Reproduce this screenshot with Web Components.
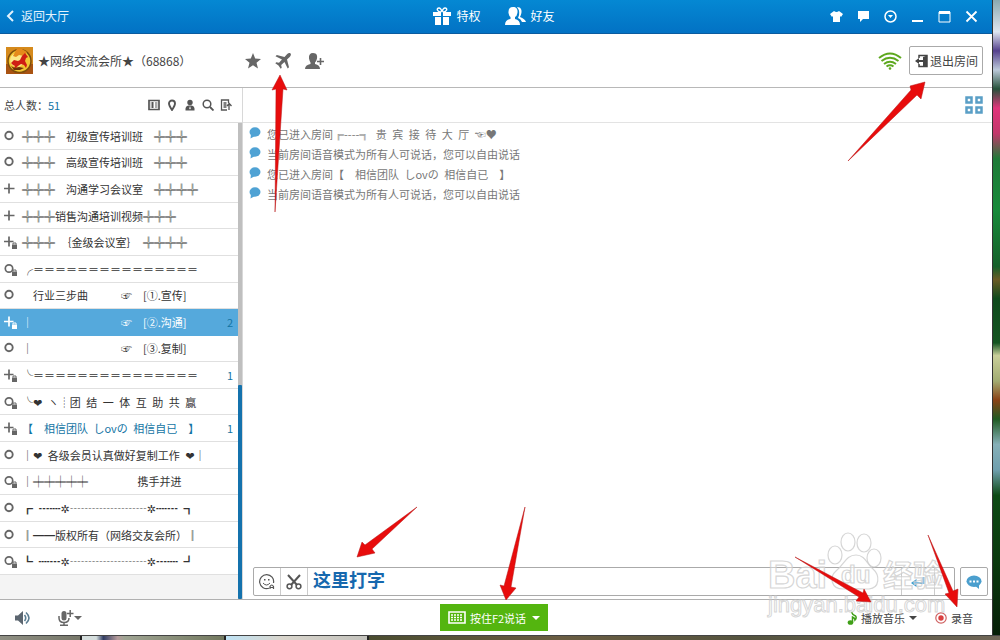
<!DOCTYPE html>
<html lang="zh-CN">
<head>
<meta charset="utf-8">
<title>网络交流会所</title>
<style>
    html, body {
        margin: 0;
        height: 100%;
    }
    body {
        font: 11px/20px "Noto Sans CJK SC", "DejaVu Sans", sans-serif;
        color: #444;
        overflow: hidden;
    }
</style>
</head>
<body>
<desktop-area>
    <room-window>
        <title-bar slot="title"></title-bar>
        <room-bar slot="room" name="★网络交流会所★" number="68868"></room-bar>
        <room-list slot="side" total="51"></room-list>
        <chat-panel slot="main">
            <chat-line>您已进入房间╔----╗&ensp;贵&ensp;宾&ensp;接&ensp;待&ensp;大&ensp;厅&ensp;☜♥</chat-line>
            <chat-line>当前房间语音模式为所有人可说话，您可以自由说话</chat-line>
            <chat-line>您已进入房间【　相信团队&ensp;しovの&ensp;相信自已　】</chat-line>
            <chat-line>当前房间语音模式为所有人可说话，您可以自由说话</chat-line>
        </chat-panel>
        <status-bar slot="status"></status-bar>
    </room-window>
    <site-watermark slot="over"></site-watermark>
    <guide-arrows slot="over"></guide-arrows>
</desktop-area>

<script>
const ICONS = {
    back: ['0 0 8 12', '<path d="M7 1 2 6l5 5" fill="none" stroke="currentColor" stroke-width="2"/>'],
    gift: ['0 0 18 18', '<path d="M0 5h8v4H0zM10 5h8v4h-8zM2 10h6v8H2zM10 10h6v8h-6z" fill="currentColor"/><path d="M8 5C4 5 3 1 6 1q2 0 3 4q1-4 3-4c3 0 2 4-2 4" fill="none" stroke="currentColor" stroke-width="1.4"/>'],
    friends: ['0 0 21 18', '<path d="M8 0c4 0 5 3 4.400 6Q12 9 10 10v2q5 1 5 6H0q0-5 5.500-6v-2Q4 9 3.500 6 3 0 8 0z" fill="currentColor"/><path d="M12 0c4 0 5 3 4.400 6Q16 8 15 10q5 2 6 5h-4q-1-3-4-4 3-6-1-11z" fill="currentColor"/>'],
    shirt: ['0 0 13 13', '<path d="M4 1q2.500 2 5 0l4 3-2 3-1-1v6H3V6L2 7 0 4z" fill="currentColor"/>'],
    say: ['0 0 13 13', '<path d="M1 1h11v8H6l-3 3V9H1z" fill="currentColor"/>'],
    more: ['0 0 13 13', '<circle cx="6.500" cy="6.500" r="5.500" fill="none" stroke="currentColor" stroke-width="1.500"/><path d="M4 5h5L6.500 8z" fill="currentColor"/>'],
    min: ['0 0 13 13', '<path d="M1 10h11v2H1z" fill="currentColor"/>'],
    max: ['0 0 13 13', '<path d="M1 2h11v10H1z" fill="none" stroke="currentColor"/><path d="M1 1h11v3H1z" fill="currentColor"/>'],
    close: ['0 0 13 13', '<path d="m1.500 1.500 10 10m0-10-10 10" stroke="currentColor" stroke-width="1.800"/>'],
    star: ['0 0 16 16', '<path d="m8 0 2.200 5.600 5.800.4-4.500 3.700L13 15.500l-5-3.200-5 3.200 1.500-5.800L0 6l5.800-.4z" fill="currentColor"/>'],
    plane: ['0 0 16 16', '<path d="M15.500.5c-1-1-2.700 0-3.500.8L9.500 4 1.800 2 .5 3.300 7 6.500 4 9.800l-2.700-.5-1 1 3.200 2.200 2.200 3.200 1-1L6.200 12l3.300-3 3.200 6.500 1.300-1.300-2-7.700L14.700 4c.8-.8 1.800-2.500.8-3.500z" fill="currentColor"/>'],
    adduser: ['0 0 19 16', '<path d="M8 0c4 0 4.500 3 4 5.500Q11.500 8 10 9.500v1.500q5 1 5 5H0q0-4 5.500-5V9.500Q4.500 8 4 5.500 3.500 0 8 0z" fill="currentColor"/><path d="M12 8.500h7M15.500 5v7" stroke="currentColor" stroke-width="1.600"/>'],
    wifi: ['0 0 24 18', '<g fill="none" stroke="#5da81e" stroke-width="2"><path d="M1 6Q12-3 23 6M3.500 9q8.500-6.500 17 0M6 12q6-4.500 12 0M8.500 14.500q3.500-2.500 7 0"/></g><circle cx="12" cy="16.500" r="1.300" fill="#5da81e"/>'],
    exit: ['0 0 13 14', '<path d="M4 4V1.500h8v11H4V10" fill="none" stroke="currentColor" stroke-width="1.500"/><path d="M8 3l4-1.500v11L8 13zM0 7l4-3v2h4v2H4v2z" fill="currentColor"/>'],
    card: ['0 0 12 12', '<path d="M1 1.500h10v9H1z" fill="none" stroke="currentColor" stroke-width="1.700"/><path d="M2.500 4H6M2.500 6H6M2.500 8H6M4.500 3v6M7 4h2.500M7 6h2.500M7 8h2.500" stroke="currentColor"/>'],
    pin: ['0 0 12 12', '<path d="M6 1.500a3 3 0 0 1 3 3Q9 6.500 6 11 3 6.500 3 4.500a3 3 0 0 1 3-3z" fill="none" stroke="currentColor" stroke-width="1.900"/>'],
    user: ['0 0 12 12', '<circle cx="6" cy="3.500" r="2.700" fill="currentColor"/><path d="M1.500 11.500Q1 7 4.500 6.500h3Q11 7 10.500 11.500z" fill="currentColor"/><path d="m6 7 .8 2.500L6 10.500l-.8-1z" fill="#fff"/>'],
    search: ['0 0 12 12', '<circle cx="5" cy="5" r="3.800" fill="none" stroke="currentColor" stroke-width="1.500"/><path d="m8 8 3.500 3.500" stroke="currentColor" stroke-width="1.800"/>'],
    export: ['0 0 12 12', '<path d="M7 11H1.500V1h7v3M3.500 4h3M3.500 6h3M3.500 8h3" fill="none" stroke="currentColor" stroke-width="1.300"/><path d="M9 11V5M7 7l2.200-2.500L11.500 7" fill="none" stroke="currentColor" stroke-width="1.300"/>'],
    open: ['0 0 14 14', '<circle cx="5" cy="6.500" r="3.700" fill="none" stroke="currentColor" stroke-width="1.900"/>'],
    plus: ['0 0 14 14', '<path d="M0 6.500h10.500M5 1.500v10" stroke="currentColor" stroke-width="1.700"/>'],
    openlock: ['0 0 14 14', '<circle cx="5" cy="6.500" r="3.700" fill="none" stroke="currentColor" stroke-width="1.700"/><path d="M8 9.500h5v4.500H8z" fill="currentColor"/><path d="M9 9.500V8h3v1.500" fill="none" stroke="currentColor"/>'],
    pluslock: ['0 0 14 14', '<path d="M0 6.500h9.500M5 1.500v10" stroke="currentColor" stroke-width="1.700"/><path d="M8 9.500h5v4.500H8z" fill="currentColor"/><path d="M9 9.500V8h3v1.500" fill="none" stroke="currentColor"/>'],
    grid: ['0 0 18 18', '<g fill="none" stroke="#5a9fc6" stroke-width="2.500"><path d="M1.500 1.500h5v5h-5zM11.500 1.500h5v5h-5zM1.500 11.500h5v5h-5zM11.500 11.500h5v5h-5z"/></g>'],
    bubble: ['0 0 12 12', '<ellipse cx="6" cy="5" rx="5.500" ry="4.700" fill="#4fa2d4"/><path d="m2 7-.5 4.500L6 9z" fill="#4fa2d4"/>'],
    smile: ['0 0 16 16', '<path d="M10 14.200A7 7 0 1 1 14.500 9" fill="none" stroke="currentColor" stroke-width="1.200"/><path d="M4 9q3.500 4 7 0" fill="none" stroke="currentColor"/><path d="M5 5h1.500v1.500H5zM9 5h1.500v1.500H9z" fill="currentColor"/><path d="M11 15v-2.500q1.800-3 3.500 0V15M11 13.500h3.500" fill="none" stroke="currentColor" stroke-width="1.200"/>'],
    cut: ['0 0 16 16', '<path d="m2 1 9 10M14 1 5 11" stroke="currentColor" stroke-width="2"/><circle cx="3.500" cy="12.300" r="2.400" fill="none" stroke="currentColor" stroke-width="1.500"/><circle cx="12.500" cy="12.300" r="2.400" fill="none" stroke="currentColor" stroke-width="1.500"/>'],
    enter: ['0 0 14 12', '<path d="M12.500 1v6H4" fill="none" stroke="#3b9bd6" stroke-width="2"/><path d="M5.500 3v8L0 7z" fill="#3b9bd6"/>'],
    dots: ['0 0 16 14', '<ellipse cx="8" cy="6.200" rx="7.500" ry="5.700" fill="#4b9fce"/><path d="m8 10 5-1v5z" fill="#4b9fce"/><path d="M3.500 5.500h2v2h-2zM7 5.500h2v2H7zM10.500 5.500h2v2h-2z" fill="#fff"/>'],
    speaker: ['0 0 16 14', '<path d="M0 4.500h3L8 0v14L3 9.500H0z" fill="#5c6670"/><path d="M9.500 4q2.500 3 0 6M11 1.500q6 5.500 0 11" fill="none" stroke="#5c7d92" stroke-width="1.600"/>'],
    mic: ['0 0 16 16', '<path d="M3.500 3.500Q3.500 1 6 1t2.500 2.500V8q0 2.500-2.500 2.500T3.500 8z" fill="currentColor"/><path d="M1 6v2q0 4.500 5 4.500T11 8M6 12v3M2 15.200h8M9 3.500h6.500M12.200 0v7" fill="none" stroke="currentColor" stroke-width="1.500"/>'],
    down: ['0 0 8 8', '<path d="M0 2h8L4 6z" fill="currentColor"/>'],
    keyboard: ['0 0 18 13', '<path d="M1 1h16v11H1z" fill="none" stroke="#fff" stroke-width="1.600"/><path d="M3 4h12M3 6.500h12M3 9h12" stroke="#fff" stroke-width="1.300" stroke-dasharray="2 1"/>'],
    note: ['0 0 10 14', '<path d="M4.500 1q1 3 4 4Q10 7 8 9q0-2-2.500-3v5.500" fill="none" stroke="#3f9f17" stroke-width="1.500"/><ellipse cx="3.500" cy="11.500" rx="2.800" ry="2.300" fill="#3f9f17"/>'],
    record: ['0 0 12 12', '<circle cx="6" cy="6" r="5.200" fill="none" stroke="#cf6262" stroke-width="1.200"/><circle cx="6" cy="6" r="2.700" fill="#da4040"/>'],
};

// shared look of buttons inside every shadow root
const BUTTON_CSS = `
    button {
        display: inline-flex;
        align-items: center;
        justify-content: center;
        margin: 0;
        padding: 0;
        border: none;
        background: none;
        font: inherit;
        color: inherit;
        white-space: nowrap;
    }
`;

class UiIcon extends HTMLElement {
    connectedCallback() {
        const [box, shapes] = ICONS[this.getAttribute('name')];
        const [, , width, height] = box.split(' ');
        this.attachShadow({ mode: 'open' });
        this.shadowRoot.innerHTML = `
        <style>
            :host { display: inline-flex; flex: none; }
            svg { display: block; }
        </style>
        <svg width="${width}" height="${height}" viewBox="${box}" aria-hidden="true">${shapes}</svg>
        `;
    }
}

class DesktopArea extends HTMLElement {
    constructor() {
        super();
        this.attachShadow({ mode: 'open' });
        this.shadowRoot.innerHTML = `
        <style>
            :host {
                display: grid;
                grid-template-columns: 1fr 8px;
                grid-template-rows: 1fr 5px;
                height: 100vh;
                position: relative;
            }
            .photo {
                border-left: 1px solid #333;
                background: linear-gradient(#8aa9b0, #dfe6f0 5%, #54408c 8%, #bcc9da 11%, #26513a 14%, #e0357b 17%, #c2386b 21%, #1f7a38 25%, #178a3a 33%, #15602a 42%, #6b5b25 44%, #0f4a1c 47%, #145421 54%, #c9cf9a 56%, #a2ac72 60%, #8a4216 63%, #1f5a22 66%, #86b0b8 70%, #6f9fae 74%, #0d4a15 78%, #0a3a0e 88%, #061f08);
            }
            .taskbar {
                grid-column: 1 / 3;
                display: flex;
                gap: 2px;
                border-top: 1px solid #444;
                background: #222;
            }
            .taskbar div { flex: 80; background: linear-gradient(90deg, #8f8f83, #77786a); }
            .taskbar div:nth-child(2) { flex: 142; background: linear-gradient(90deg, #d5dedd 10%, #313d63 15%, #b59b9b 25%, #9fa493 30%, #73795f); }
            .taskbar div:nth-child(3) { flex: 140; background: linear-gradient(90deg, #bfe3f5, #d9d5cc 40%, #c3c2bc); }
            .taskbar div:nth-child(4) { flex: 630; background: linear-gradient(90deg, #4b4d30, #6a5d42 30%, #55543f 60%, #6f6657); }
        </style>
        <slot></slot>
        <div class="photo"></div>
        <div class="taskbar"><div></div><div></div><div></div><div></div></div>
        <slot name="over"></slot>
        `;
    }
}

class RoomWindow extends HTMLElement {
    constructor() {
        super();
        this.attachShadow({ mode: 'open' });
        this.shadowRoot.innerHTML = `
        <style>
            :host {
                display: flex;
                flex-direction: column;
                min-height: 0;
                background: #fff;
            }
            .body {
                flex: 1;
                min-height: 0;
                display: grid;
                grid-template-columns: 243px 1fr;
            }
        </style>
        <slot name="title"></slot>
        <slot name="room"></slot>
        <div class="body">
            <slot name="side"></slot>
            <slot name="main"></slot>
        </div>
        <slot name="status"></slot>
        `;
    }
}

class TitleBar extends HTMLElement {
    constructor() {
        super();
        this.attachShadow({ mode: 'open' });
        this.shadowRoot.innerHTML = `
        <style>
            ${BUTTON_CSS}
            :host {
                display: grid;
                grid-template-columns: 1fr auto 1fr;
                align-items: center;
                height: 32px;
                padding: 0 14px 1px 6px;
                border-bottom: 1px solid #0a5b9f;
                background: linear-gradient(#0588d3, #0272c4);
                color: #fff;
                font-size: 12px;
            }
            .back { justify-self: start; gap: 7px; color: #e3f2fc; }
            .tabs { display: flex; gap: 24px; padding-left: 4px; }
            .tabs button { gap: 5px; }
            .controls { justify-self: end; display: flex; gap: 14px; }
        </style>
        <button class="back"><ui-icon name="back"></ui-icon>返回大厅</button>
        <div class="tabs">
            <button><ui-icon name="gift"></ui-icon>特权</button>
            <button><ui-icon name="friends"></ui-icon>好友</button>
        </div>
        <div class="controls">
            <button aria-label="换肤"><ui-icon name="shirt"></ui-icon></button>
            <button aria-label="反馈"><ui-icon name="say"></ui-icon></button>
            <button aria-label="菜单"><ui-icon name="more"></ui-icon></button>
            <button aria-label="最小化"><ui-icon name="min"></ui-icon></button>
            <button aria-label="最大化"><ui-icon name="max"></ui-icon></button>
            <button aria-label="关闭"><ui-icon name="close"></ui-icon></button>
        </div>
        `;
    }
}

class RoomBar extends HTMLElement {
    connectedCallback() {
        this.attachShadow({ mode: 'open' });
        this.shadowRoot.innerHTML = `
        <style>
            ${BUTTON_CSS}
            :host {
                display: flex;
                align-items: center;
                height: 53px;
                padding: 0 9px 0 6px;
                border-bottom: 1px solid #b8b8b8;
                font-size: 12px;
            }
            .logo { flex: none; margin-right: 5px; }
            .name { width: 207px; white-space: nowrap; }
            .tools { display: flex; gap: 14px; color: #666; flex: 1; }
            .exit {
                gap: 2px;
                height: 29px;
                margin-left: 7px;
                padding: 0 4px 0 5px;
                border: 1px solid #aaa;
                border-radius: 2px;
            }
        </style>
        <svg class="logo" width="27" height="27" viewBox="0 0 27 27" aria-hidden="true">
            <path d="M0 0h27v27H0z" fill="#d58a1c"/>
            <path d="M0 17h27v10H0z" fill="#a95312"/>
            <circle cx="13.500" cy="14" r="11.500" fill="#f2c633" stroke="#7c4d0b" stroke-width="1.500"/>
            <circle cx="11" cy="13" r="7" fill="#fbe887"/>
            <path d="M10 3q2-3 6-1l5 3-3 4-5-1-3 2-3-1z" fill="#e58a1b"/>
            <path d="M19 6l3 4-2 1-1 3 2 4-1 3-2-3-3-1-3 2-3 3-2 1 2-4-2-1-2-2 3-3 4 1 2-1 2-4z" fill="#cf1e14"/>
            <path d="M5 19l4 2 4-1 5 1-4 2H8z" fill="#6d3208"/>
        </svg>
        <span class="name">${this.getAttribute('name')}（${this.getAttribute('number')}）</span>
        <div class="tools">
            <button aria-label="收藏"><ui-icon name="star"></ui-icon></button>
            <button aria-label="飞机票"><ui-icon name="plane"></ui-icon></button>
            <button aria-label="加好友"><ui-icon name="adduser"></ui-icon></button>
        </div>
        <ui-icon name="wifi"></ui-icon>
        <button class="exit"><ui-icon name="exit"></ui-icon>退出房间</button>
        `;
    }
}

class RoomItem extends HTMLElement {
    connectedCallback() {
        const count = this.getAttribute('count') || '';
        this.attachShadow({ mode: 'open' });
        this.shadowRoot.innerHTML = `
        <style>
            ${BUTTON_CSS}
            :host {
                display: flex;
                min-height: 0;
                border-bottom: 1px solid #e0e0e0;
                box-sizing: border-box;
                background: #fff;
                color: #333;
            }
            :host([current]) { color: #1374a4; }
            :host([selected]) { background: #55a9dc; border-color: #55a9dc; color: #fff; }
            button {
                flex: 1;
                min-width: 0;
                justify-content: flex-start;
                gap: 4px;
                padding: 0 5px 0 4px;
            }
            ui-icon { color: #666; }
            :host([selected]) ui-icon { color: #fff; }
            .name { flex: 1; text-align: left; white-space: pre; }
            .count { color: #1374a4; }
        </style>
        <button>
            <ui-icon name="${this.getAttribute('icon')}"></ui-icon>
            <span class="name"><slot></slot></span>
            <span class="count">${count}</span>
        </button>
        `;
    }
}

class RoomList extends HTMLElement {
    connectedCallback() {
        // \u2002 is a half-width gap, \u3000 a full-width one
        let rooms = [
            ['open', '╬╬╬　初级宣传培训班　╬╬╬'],
            ['open', '╬╬╬　高级宣传培训班　╬╬╬'],
            ['plus', '╬╬╬　沟通学习会议室　╬╬╬╬'],
            ['plus', '╬╬╬销售沟通培训视频╬╬╬'],
            ['pluslock', '╬╬╬　｛金级会议室｝　╬╬╬╬'],
            ['openlock', '╭＝＝＝＝＝＝＝＝＝＝＝＝＝＝＝'],
            ['open', '　行业三步曲　　　☞　[①.宣传]'],
            ['pluslock', '│　　　　　　　　☞　[②.沟通]', 'selected count="2"'],
            ['open', '│　　　　　　　　☞　[③.复制]'],
            ['pluslock', '╰＝＝＝＝＝＝＝＝＝＝＝＝＝＝＝', 'count="1"'],
            ['openlock', '╰❤\u2002ヽ┊团\u2002结\u2002一\u2002体\u2002互\u2002助\u2002共\u2002赢'],
            ['pluslock', '【　相信团队\u2002しovの\u2002相信自已　】', 'current count="1"'],
            ['open', '│❤\u2002各级会员认真做好复制工作\u2002❤│'],
            ['openlock', '│╪╪╪╪╪　　　　\u2002携手并进'],
            ['open', '┏\u2002┅┉✲┄┄┄┄┄┄┄✲┉┅\u2002┓'],
            ['open', '║━━版权所有（网络交友会所）║'],
            ['openlock', '┗\u2002┉┅✲┄┄┄┄┄┄┄✲┅┉\u2002┛'],
        ];
        this.attachShadow({ mode: 'open' });
        this.shadowRoot.innerHTML = `
        <style>
            ${BUTTON_CSS}
            :host {
                display: flex;
                flex-direction: column;
                min-height: 0;
                border-right: 1px solid #d8d8d8;
            }
            header {
                display: flex;
                align-items: center;
                height: 34px;
                padding: 0 10px 0 4px;
                border-bottom: 1px solid #ddd;
            }
            .total { flex: 1; }
            .total b { font-weight: normal; color: #1374a4; }
            .tools { display: flex; gap: 6px; color: #555; }
            .scroll { flex: 1; min-height: 0; display: flex; }
            .rooms {
                flex: 1;
                min-width: 0;
                display: grid;
                grid-auto-rows: 1fr;
                padding-bottom: 24px;
                background: #f4f4f4;
            }
            .track { width: 4px; display: flex; flex-direction: column; background: #bfbfbf; }
            .track::before { content: ""; flex: 55; }
            .thumb { flex: 45; border-radius: 1px; background: #1472ad; }
        </style>
        <header>
            <span class="total">总人数：<b>${this.getAttribute('total')}</b></span>
            <div class="tools">
                <button aria-label="名片"><ui-icon name="card"></ui-icon></button>
                <button aria-label="定位"><ui-icon name="pin"></ui-icon></button>
                <button aria-label="成员"><ui-icon name="user"></ui-icon></button>
                <button aria-label="搜索"><ui-icon name="search"></ui-icon></button>
                <button aria-label="导出"><ui-icon name="export"></ui-icon></button>
            </div>
        </header>
        <div class="scroll">
            <div class="rooms">
                ${rooms.map(([icon, name, extra = '']) => `<room-item icon="${icon}" ${extra}>${name}</room-item>`).join('')}
            </div>
            <div class="track"><div class="thumb"></div></div>
        </div>
        `;
    }
}

class ChatLine extends HTMLElement {
    constructor() {
        super();
        this.attachShadow({ mode: 'open' });
        this.shadowRoot.innerHTML = `
        <style>
            :host {
                display: flex;
                gap: 6px;
                line-height: 20px;
                color: #777;
                white-space: pre;
            }
            ui-icon { padding-top: 3px; }
        </style>
        <ui-icon name="bubble"></ui-icon>
        <span><slot></slot></span>
        `;
    }
}

class ChatPanel extends HTMLElement {
    constructor() {
        super();
        this.attachShadow({ mode: 'open' });
        this.shadowRoot.innerHTML = `
        <style>
            :host {
                display: flex;
                flex-direction: column;
                min-width: 0;
                min-height: 0;
            }
            header {
                display: flex;
                align-items: center;
                justify-content: flex-end;
                height: 34px;
                padding-right: 9px;
                border-bottom: 1px solid #e3e3e3;
            }
            header button { display: flex; padding: 0; border: none; background: none; }
            .log { flex: 1; min-height: 0; padding: 1px 6px; }
        </style>
        <header><button aria-label="应用"><ui-icon name="grid"></ui-icon></button></header>
        <div class="log"><slot></slot></div>
        <message-box></message-box>
        `;
    }
}

class MessageBox extends HTMLElement {
    constructor() {
        super();
        this.attachShadow({ mode: 'open' });
        this.shadowRoot.innerHTML = `
        <style>
            ${BUTTON_CSS}
            :host {
                display: flex;
                gap: 5px;
                padding: 0 4px 3px 10px;
            }
            .field, .say {
                box-sizing: border-box;
                height: 29px;
                border: 1px solid #aaa;
                border-radius: 2px;
            }
            .field { flex: 1; display: flex; }
            .field button { width: 27px; border-right: 1px solid #ccc; color: #555; }
            .field .enter { width: 34px; border-left: 1px solid #ccc; }
            .field .mode { width: 19px; border: none; }
            .say { width: 28px; }
            input {
                flex: 1;
                min-width: 0;
                padding: 0 5px 6px;
                border: none;
                outline: none;
                background: none;
                font: bold 18px/20px "Noto Sans CJK SC", sans-serif;
                color: #1668ae;
            }
        </style>
        <div class="field">
            <button aria-label="表情"><ui-icon name="smile"></ui-icon></button>
            <button aria-label="截图"><ui-icon name="cut"></ui-icon></button>
            <input type="text" aria-label="消息" value="这里打字">
            <button class="enter" aria-label="发送"><ui-icon name="enter"></ui-icon></button>
            <button class="mode" aria-label="发送方式"></button>
        </div>
        <button class="say" aria-label="聊天"><ui-icon name="dots"></ui-icon></button>
        `;
    }
}

class StatusBar extends HTMLElement {
    constructor() {
        super();
        this.attachShadow({ mode: 'open' });
        this.shadowRoot.innerHTML = `
        <style>
            ${BUTTON_CSS}
            :host {
                display: grid;
                grid-template-columns: 1fr auto 1fr;
                align-items: center;
                height: 35px;
                padding: 0 19px 0 15px;
                border-top: 1px solid #b0b0b0;
            }
            .sound { display: flex; gap: 27px; color: #666; }
            .talk {
                gap: 4px;
                height: 27px;
                padding: 0 8px;
                background: #54b50f;
                color: #fff;
            }
            .talk span { padding-right: 2px; }
            .media { justify-self: end; display: flex; gap: 18px; }
            .media button { gap: 4px; }
        </style>
        <div class="sound">
            <button aria-label="音量"><ui-icon name="speaker"></ui-icon></button>
            <button aria-label="麦克风"><ui-icon name="mic"></ui-icon><ui-icon name="down"></ui-icon></button>
        </div>
        <button class="talk"><ui-icon name="keyboard"></ui-icon><span>按住F2说话</span><ui-icon name="down"></ui-icon></button>
        <div class="media">
            <button><ui-icon name="note"></ui-icon>播放音乐 <ui-icon name="down"></ui-icon></button>
            <button><ui-icon name="record"></ui-icon>录音</button>
        </div>
        `;
    }
}

class SiteWatermark extends HTMLElement {
    constructor() {
        super();
        this.attachShadow({ mode: 'open' });
        this.shadowRoot.innerHTML = `
        <style>
            :host {
                position: absolute;
                right: 48px;
                bottom: 18px;
                pointer-events: none;
            }
            svg { display: block; overflow: visible; }
            g { fill: #fff; fill-opacity: 0.4; stroke: #ccc; stroke-opacity: 0.8; stroke-width: 1.200; }
            .latin { font: bold 38px "Liberation Sans", sans-serif; }
            .small { font-size: 24px; }
            .han { font: bold 30px "Noto Sans CJK SC", sans-serif; }
            .url { font: 22px "Liberation Sans", sans-serif; stroke-width: 1; }
        </style>
        <svg width="184" height="92" viewBox="0 0 184 92">
            <g>
                <text class="latin" x="0" y="58">Bai</text>
                <ellipse cx="67" cy="25" rx="7" ry="9"/>
                <ellipse cx="80" cy="12" rx="7" ry="9"/>
                <ellipse cx="96" cy="13" rx="7" ry="9"/>
                <ellipse cx="106" cy="28" rx="7" ry="9"/>
                <path d="M88 25c9 0 11 9 17 14 7 6 7 19-4 20-8 0-18-1-26 0-12 0-14-12-7-18 8-6 10-16 20-16z"/>
                <text class="latin small" x="73" y="53">du</text>
                <text class="han" x="115" y="56">经验</text>
                <text class="url" x="0" y="82">jingyan.baidu.com</text>
            </g>
        </svg>
        `;
    }
}

class GuideArrows extends HTMLElement {
    constructor() {
        super();
        this.attachShadow({ mode: 'open' });
        this.shadowRoot.innerHTML = `
        <style>
            :host {
                position: absolute;
                inset: 0;
                pointer-events: none;
            }
            svg { display: block; width: 100%; height: 100%; }
        </style>
        <svg viewBox="0 0 1000 640" preserveAspectRatio="none" aria-hidden="true">
            <g fill="#e80c0c" stroke="#b51414" stroke-width="0.500">
                <path d="M280 75l7 15-4-1-8 123 1-123-4 1z"/>
                <path d="M925 82l-4 17-4-4-69 66 63-71-1-4z"/>
                <path d="M357 557l5-15 3 3 52-38-45 42 3 4z"/>
                <path d="M506 600l-6-15 4 1 21-79-14 80 5 1z"/>
                <path d="M871 602l-15-1 3-4-64-40 68 36 1-4z"/>
                <path d="M957 607l-12-13 4-1-21-58 25 56 5-2z"/>
            </g>
        </svg>
        `;
    }
}

customElements.define('ui-icon', UiIcon);
customElements.define('room-item', RoomItem);
customElements.define('message-box', MessageBox);
customElements.define('desktop-area', DesktopArea);
customElements.define('room-window', RoomWindow);
customElements.define('title-bar', TitleBar);
customElements.define('room-bar', RoomBar);
customElements.define('room-list', RoomList);
customElements.define('chat-line', ChatLine);
customElements.define('chat-panel', ChatPanel);
customElements.define('status-bar', StatusBar);
customElements.define('site-watermark', SiteWatermark);
customElements.define('guide-arrows', GuideArrows);
</script>
</body>
</html>
